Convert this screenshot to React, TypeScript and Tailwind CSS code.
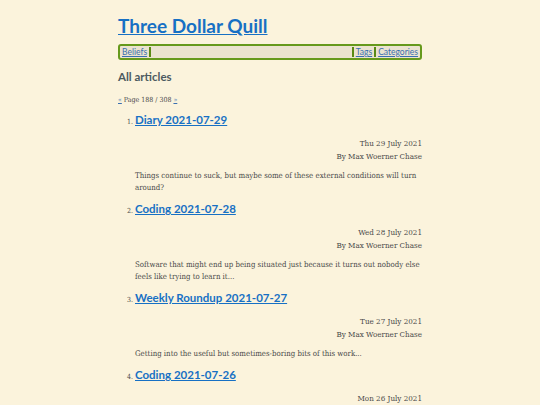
import React from 'react';

const articles = [
  { n: 1, title: 'Diary 2021-07-29', date: 'Thu 29 July 2021', summary: 'Things continue to suck, but maybe some of these external conditions will turn around?' },
  { n: 2, title: 'Coding 2021-07-28', date: 'Wed 28 July 2021', summary: 'Software that might end up being situated just because it turns out nobody else feels like trying to learn it...' },
  { n: 3, title: 'Weekly Roundup 2021-07-27', date: 'Tue 27 July 2021', summary: 'Getting into the useful but sometimes-boring bits of this work...' },
  { n: 4, title: 'Coding 2021-07-26', date: 'Mon 26 July 2021', summary: '' },
];

const head = "font-['Lato',sans-serif]";
const body = "font-['DejaVu_Serif_Condensed','DejaVu_Serif',serif]";

export default function App() {
  return (
    <div className="min-h-[405px] bg-[#fbf3dc] flex justify-center">
      <div className="w-[304px] pt-[12px]">
        <a href="#" className={`${head} block text-[19px] font-bold leading-[27px] text-[#1770c4] underline`}>
          Three Dollar Quill
        </a>

        {/* nav */}
        <div className={`${head} mt-[5px] h-[16px] flex items-center border-2 border-[#66991c] rounded-[3px] bg-[#ebe3cf] px-[2px] text-[8.5px] leading-none`}>
          <a href="#" className="text-[#3a6fb0] underline">Beliefs</a>
          <span className="ml-[2px] w-[2px] h-[10px] bg-[#5a8a14]" />
          <div className="flex-1" />
          <span className="mr-[2px] w-[2px] h-[10px] bg-[#5a8a14]" />
          <a href="#" className="text-[#3a6fb0] underline">Tags</a>
          <span className="mx-[2px] w-[2px] h-[10px] bg-[#5a8a14]" />
          <a href="#" className="text-[#3a6fb0] underline">Categories</a>
        </div>

        <h2 className={`${head} mt-[8px] text-[11.5px] font-bold leading-[18px] text-[#4c5a60]`}>All articles</h2>

        <p className={`${body} mt-[9px] text-[7px] leading-[10px] text-[#4a4a4a]`}>
          <a href="#" className="text-[#3a6fb0] underline">«</a> Page 188 / 308{' '}
          <a href="#" className="text-[#3a6fb0] underline">»</a>
        </p>

        <ol className="mt-[6px] pl-[17px]">
          {articles.map((a) => (
            <li key={a.n} className="mb-[6px]">
              <div className="flex items-baseline">
                <span className={`${body} w-[17px] -ml-[17px] pr-[2px] text-right text-[7px] text-[#4a4a4a]`}>{a.n}.</span>
                <a href="#" className={`${head} text-[11.5px] font-bold leading-[18px] text-[#1770c4] underline`}>{a.title}</a>
              </div>
              <div className={`${body} mt-[8px] text-right text-[8px] leading-[13px] text-[#4a4a4a]`}>
                <div>{a.date}</div>
                <div>By Max Woerner Chase</div>
              </div>
              {a.summary && (
                <p className={`${body} mt-[7px] text-[7.8px] leading-[12px] text-[#4a4a4a]`}>{a.summary}</p>
              )}
            </li>
          ))}
        </ol>
      </div>
    </div>
  );
}
